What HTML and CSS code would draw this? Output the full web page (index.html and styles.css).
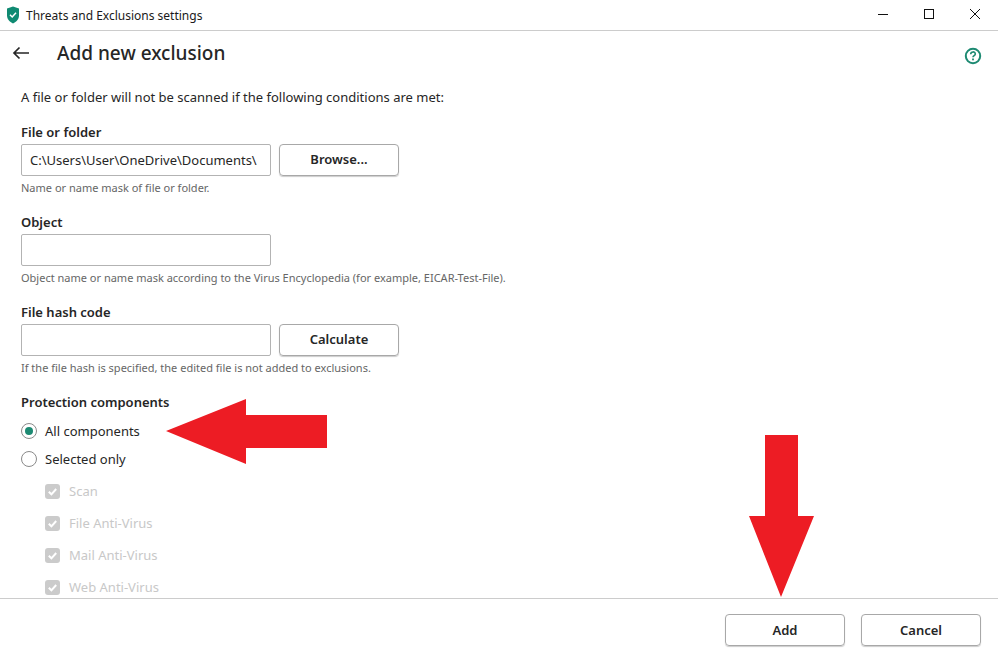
FILE: index.html
```html
<!DOCTYPE html>
<html lang="en">
  <head>
    <meta charset="utf-8" />
    <title>Threats and Exclusions settings</title>
    <link rel="stylesheet" href="styles.css">
  </head>
  <body>
    <div class="window">
      <div class="title-bar">
        <svg class="shield" width="14" height="18" viewBox="0 0 14 18">
          <path d="M7 .5 13 2.6V9.5c0 3.6-2.6 6.3-6 8-3.4-1.7-6-4.4-6-8V2.6z" fill="#0f8a72"/>
          <path d="M4 8.8 6.2 11 10 6.8" fill="none" stroke="#fff" stroke-width="1.5"/>
        </svg>
        <span class="title-text">Threats and Exclusions settings</span>
        <div class="win-controls">
          <div class="win-btn">
            <svg width="12" height="12" viewBox="0 0 12 12"><path d="M1 6.5h10" stroke="#111" fill="none"/></svg>
          </div>
          <div class="win-btn">
            <svg width="12" height="12" viewBox="0 0 12 12"><rect x="1.5" y="1.5" width="9" height="9" stroke="#111" fill="none"/></svg>
          </div>
          <div class="win-btn">
            <svg width="12" height="12" viewBox="0 0 12 12"><path d="M1 1 11 11M11 1 1 11" stroke="#111" fill="none"/></svg>
          </div>
        </div>
      </div>

      <div class="page-head">
        <svg class="back" width="18" height="14" viewBox="0 0 18 14">
          <path d="M17 7H2M7.5 1.5 2 7l5.5 5.5" fill="none" stroke="#262626" stroke-width="1.7"/>
        </svg>
        <h1>Add new exclusion</h1>
        <svg class="help" width="18" height="18" viewBox="0 0 18 18">
          <circle cx="9" cy="9" r="7.2" fill="none" stroke="#1d8a72" stroke-width="2"/>
          <path d="M6.7 7.2c0-3 4.6-3 4.6-.2 0 1.6-2.3 1.7-2.3 3.3" fill="none" stroke="#1d8a72" stroke-width="1.6"/>
          <rect x="8.1" y="11.5" width="1.8" height="1.8" fill="#1d8a72"/>
        </svg>
      </div>

      <div class="content">
        <p class="intro">A file or folder will not be scanned if the following conditions are met:</p>

        <div class="field">
          <div class="field-label">File or folder</div>
          <div class="field-row">
            <div class="input">C:\Users\User\OneDrive\Documents\</div>
            <div class="btn">Browse...</div>
          </div>
          <div class="hint">Name or name mask of file or folder.</div>
        </div>

        <div class="field">
          <div class="field-label">Object</div>
          <div class="field-row">
            <div class="input"></div>
          </div>
          <div class="hint">Object name or name mask according to the Virus Encyclopedia (for example, EICAR-Test-File).</div>
        </div>

        <div class="field">
          <div class="field-label">File hash code</div>
          <div class="field-row">
            <div class="input"></div>
            <div class="btn">Calculate</div>
          </div>
          <div class="hint">If the file hash is specified, the edited file is not added to exclusions.</div>
        </div>

        <div class="field-label">Protection components</div>
        <div class="radios">
          <div class="radio-row"><span class="radio on"></span>All components</div>
          <div class="radio-row"><span class="radio"></span>Selected only</div>
        </div>
        <div class="checks">
          <div class="check-row"><span class="check"><svg width="15" height="15" viewBox="0 0 15 15"><path d="M3.8 7.8 6.4 10.3 11.2 5" fill="none" stroke="#fff" stroke-width="2"/></svg></span>Scan</div>
          <div class="check-row"><span class="check"><svg width="15" height="15" viewBox="0 0 15 15"><path d="M3.8 7.8 6.4 10.3 11.2 5" fill="none" stroke="#fff" stroke-width="2"/></svg></span>File Anti-Virus</div>
          <div class="check-row"><span class="check"><svg width="15" height="15" viewBox="0 0 15 15"><path d="M3.8 7.8 6.4 10.3 11.2 5" fill="none" stroke="#fff" stroke-width="2"/></svg></span>Mail Anti-Virus</div>
          <div class="check-row"><span class="check"><svg width="15" height="15" viewBox="0 0 15 15"><path d="M3.8 7.8 6.4 10.3 11.2 5" fill="none" stroke="#fff" stroke-width="2"/></svg></span>Web Anti-Virus</div>
        </div>
      </div>

      <div class="footer">
        <div class="btn">Add</div>
        <div class="btn">Cancel</div>
      </div>

      <!-- annotation arrows drawn over the screenshot -->
      <svg class="annotation" width="998" height="648" viewBox="0 0 998 648">
        <path d="M166 431 246 399V415H327V448H246V464z" fill="#ed1c24"/>
        <path d="M765 435H798V516H814L781 597 749 516H765z" fill="#ed1c24"/>
      </svg>
    </div>
  </body>
</html>
```

FILE: styles.css
```css
body, html {
  margin: 0;
  padding: 0;
  background-color: #fff;
  font-family: "Noto Sans", "Open Sans", "Liberation Sans", sans-serif;
  font-size: 13px;
  color: #262626;
}
.window {
  position: relative;
  width: 998px;
  height: 648px;
  display: flex;
  flex-direction: column;
  overflow: hidden;
}
.title-bar {
  height: 30px;
  flex: none;
  display: flex;
  align-items: center;
  border-bottom: 1px solid #ccc;
  padding-left: 6px;
}
.shield {
  flex: none;
  margin-right: 6px;
}
.title-text {
  font-size: 12px;
  color: #1a1a1a;
}
.win-controls {
  margin-left: auto;
  display: flex;
}
.win-btn {
  width: 46px;
  height: 30px;
  display: flex;
  align-items: center;
  justify-content: center;
  padding-bottom: 2px;
  box-sizing: border-box;
}

.page-head {
  height: 44px;
  flex: none;
  display: flex;
  align-items: center;
  padding: 0 16px 0 12px;
}
.back {
  flex: none;
  margin-right: 27px;
  margin-bottom: 1px;
}
.page-head h1 {
  margin: 0;
  font-size: 19px;
  font-weight: 500;
}
.help {
  margin-left: auto;
  margin-top: 6px;
}

.content {
  flex: 1;
  min-height: 0;
  overflow: hidden;
  padding: 12px 21px 0;
}
.intro {
  margin: 0 0 15px;
  line-height: 20px;
}
.field {
  margin-bottom: 12px;
}
.field-label {
  font-weight: 600;
  line-height: 20px;
}
.field-row {
  display: flex;
  gap: 8px;
  margin-top: 2px;
}
.input {
  width: 250px;
  height: 32px;
  box-sizing: border-box;
  border: 1px solid #b3b3b3;
  border-radius: 2px;
  padding: 0 8px;
  line-height: 31px;
  white-space: nowrap;
  overflow: hidden;
}
.btn {
  width: 120px;
  height: 32px;
  box-sizing: border-box;
  border: 1px solid #a8a8a8;
  border-radius: 4px;
  box-shadow: 0 1px 1px rgba(0,0,0,.2);
  text-align: center;
  line-height: 28px;
  font-weight: 600;
}
.hint {
  font-size: 11px;
  line-height: 24px;
  color: #666;
}

.radios {
  margin: 5px 0 2px;
}
.radio-row {
  height: 28px;
  display: flex;
  align-items: center;
}
.radio {
  width: 16px;
  height: 16px;
  box-sizing: border-box;
  border: 1px solid #8a8a8a;
  border-radius: 50%;
  margin-right: 8px;
  display: flex;
  align-items: center;
  justify-content: center;
}
.radio.on::after {
  content: "";
  width: 8px;
  height: 8px;
  border-radius: 50%;
  background-color: #1d8a72;
}
.checks {
  padding-left: 24px;
}
.check-row {
  height: 32px;
  display: flex;
  align-items: center;
  color: #c8c8c8;
}
.check {
  width: 15px;
  height: 15px;
  border-radius: 3px;
  background-color: #cbcbcb;
  margin-right: 9px;
  display: flex;
}

.footer {
  height: 50px;
  flex: none;
  box-sizing: border-box;
  border-top: 1px solid #ccc;
  display: flex;
  justify-content: flex-end;
  gap: 16px;
  padding: 15px 17px 0 0;
}
.footer .btn {
  line-height: 30px;
}

.annotation {
  position: absolute;
  left: 0;
  top: 0;
  pointer-events: none;
}
```
